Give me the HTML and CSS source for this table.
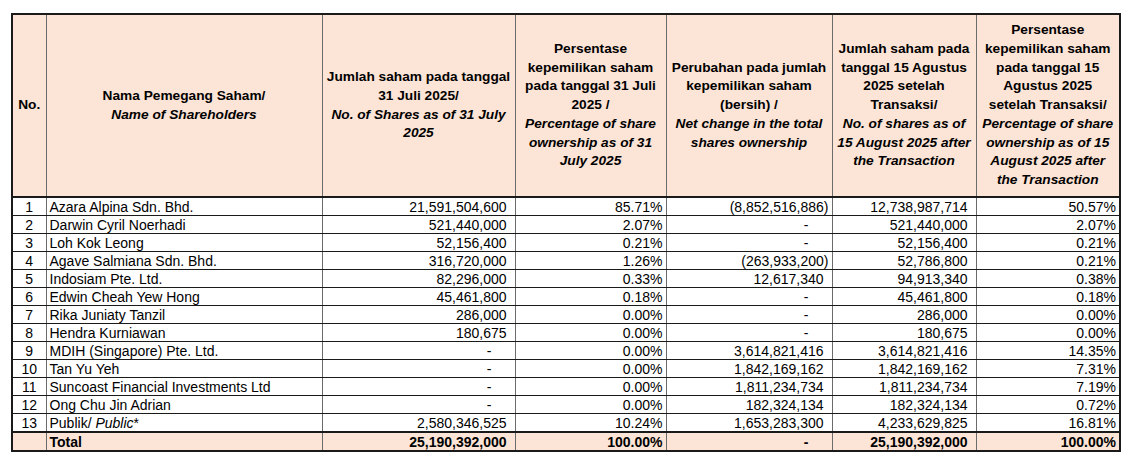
FILE: index.html
```html
<!DOCTYPE html>
<html>
<head>
<meta charset="utf-8">
<link rel="stylesheet" href="styles.css">
</head>
<body>
<table class="sh">
  <colgroup>
    <col class="c-no"><col class="c-name"><col class="c-a"><col class="c-b"><col class="c-c"><col class="c-d"><col class="c-e">
  </colgroup>
  <thead>
    <tr class="hd">
      <th>No.</th>
      <th>Nama Pemegang Saham/<br><i>Name of Shareholders</i></th>
      <th>Jumlah saham pada tanggal<br>31 Juli 2025/<br><i>No. of Shares as of 31 July<br>2025</i></th>
      <th>Persentase<br>kepemilikan saham<br>pada tanggal 31 Juli<br>2025 /<br><i>Percentage of share<br>ownership as of 31<br>July 2025</i></th>
      <th>Perubahan pada jumlah<br>kepemilikan saham<br>(bersih) /<br><i>Net change in the total<br>shares ownership</i></th>
      <th>Jumlah saham pada<br>tanggal 15 Agustus<br>2025 setelah<br>Transaksi/<br><i>No. of shares as of<br>15 August 2025 after<br>the Transaction</i></th>
      <th>Persentase<br>kepemilikan saham<br>pada tanggal 15<br>Agustus 2025<br>setelah Transaksi/<br><i>Percentage of share<br>ownership as of 15<br>August 2025 after<br>the Transaction</i></th>
    </tr>
  </thead>
  <tbody>
    <tr><td class="no">1</td><td class="nm">Azara Alpina Sdn. Bhd.</td><td class="num">21,591,504,600</td><td class="pct">85.71%</td><td class="neg">(8,852,516,886)</td><td class="num">12,738,987,714</td><td class="pct">50.57%</td></tr>
    <tr><td class="no">2</td><td class="nm">Darwin Cyril Noerhadi</td><td class="num">521,440,000</td><td class="pct">2.07%</td><td class="dash">-</td><td class="num">521,440,000</td><td class="pct">2.07%</td></tr>
    <tr><td class="no">3</td><td class="nm">Loh Kok Leong</td><td class="num">52,156,400</td><td class="pct">0.21%</td><td class="dash">-</td><td class="num">52,156,400</td><td class="pct">0.21%</td></tr>
    <tr><td class="no">4</td><td class="nm">Agave Salmiana Sdn. Bhd.</td><td class="num">316,720,000</td><td class="pct">1.26%</td><td class="neg">(263,933,200)</td><td class="num">52,786,800</td><td class="pct">0.21%</td></tr>
    <tr><td class="no">5</td><td class="nm">Indosiam Pte. Ltd.</td><td class="num">82,296,000</td><td class="pct">0.33%</td><td class="num">12,617,340</td><td class="num">94,913,340</td><td class="pct">0.38%</td></tr>
    <tr><td class="no">6</td><td class="nm">Edwin Cheah Yew Hong</td><td class="num">45,461,800</td><td class="pct">0.18%</td><td class="dash">-</td><td class="num">45,461,800</td><td class="pct">0.18%</td></tr>
    <tr><td class="no">7</td><td class="nm">Rika Juniaty Tanzil</td><td class="num">286,000</td><td class="pct">0.00%</td><td class="dash">-</td><td class="num">286,000</td><td class="pct">0.00%</td></tr>
    <tr><td class="no">8</td><td class="nm">Hendra Kurniawan</td><td class="num">180,675</td><td class="pct">0.00%</td><td class="dash">-</td><td class="num">180,675</td><td class="pct">0.00%</td></tr>
    <tr><td class="no">9</td><td class="nm">MDIH (Singapore) Pte. Ltd.</td><td class="dash">-</td><td class="pct">0.00%</td><td class="num">3,614,821,416</td><td class="num">3,614,821,416</td><td class="pct">14.35%</td></tr>
    <tr><td class="no">10</td><td class="nm">Tan Yu Yeh</td><td class="dash">-</td><td class="pct">0.00%</td><td class="num">1,842,169,162</td><td class="num">1,842,169,162</td><td class="pct">7.31%</td></tr>
    <tr><td class="no">11</td><td class="nm">Suncoast Financial Investments Ltd</td><td class="dash">-</td><td class="pct">0.00%</td><td class="num">1,811,234,734</td><td class="num">1,811,234,734</td><td class="pct">7.19%</td></tr>
    <tr><td class="no">12</td><td class="nm">Ong Chu Jin Adrian</td><td class="dash">-</td><td class="pct">0.00%</td><td class="num">182,324,134</td><td class="num">182,324,134</td><td class="pct">0.72%</td></tr>
    <tr><td class="no">13</td><td class="nm">Publik/ <i>Public</i>*</td><td class="num">2,580,346,525</td><td class="pct">10.24%</td><td class="num">1,653,283,300</td><td class="num">4,233,629,825</td><td class="pct">16.81%</td></tr>
    <tr class="total"><td class="no"></td><td class="nm">Total</td><td class="num">25,190,392,000</td><td class="pct">100.00%</td><td class="dash">-</td><td class="num">25,190,392,000</td><td class="pct">100.00%</td></tr>
  </tbody>
</table>
</body>
</html>
```

FILE: styles.css
```css
html, body {
  margin: 0;
  background: #ffffff;
}
body {
  padding: 13px 0 0 11px;
  font-family: "Liberation Sans", Arial, sans-serif;
  color: #000;
}
.sh {
  border-collapse: collapse;
  table-layout: fixed;
  width: 1110px;
  border: 2px solid #1a1a1a;
}
.c-no { width: 34px; }
.c-name { width: 276px; }
.c-a { width: 193px; }
.c-b { width: 151px; }
.c-c { width: 166px; }
.c-d { width: 144px; }
.c-e { width: 144px; }

.hd th {
  background: #fce4d6;
  height: 181px;
  padding: 0 2px;
  font-size: 13.7px;
  line-height: 18.8px;
  font-weight: bold;
  text-align: center;
  vertical-align: middle;
  white-space: nowrap;
  border-left: 1px solid #6b6b6b;
  border-right: 1px solid #6b6b6b;
  border-bottom: 2px solid #1a1a1a;
}
.sh td {
  height: 17px;
  padding: 0 3px;
  font-size: 14px;
  line-height: 16px;
  white-space: nowrap;
  overflow: hidden;
  border-left: 1px solid #6b6b6b;
  border-right: 1px solid #6b6b6b;
  border-bottom: 1px solid #1a1a1a;
  vertical-align: middle;
}
.sh td.no { text-align: center; padding: 0; }
.sh td.nm { text-align: left; }
.sh td.num { text-align: right; padding-right: 8px; }
.sh td.neg { text-align: right; padding-right: 3px; }
.sh td.pct { text-align: right; padding-right: 3px; }
.sh td.dash { text-align: right; padding-right: 23px; }

.total td {
  background: #fce4d6;
  font-weight: bold;
  border-top: 2px solid #1a1a1a;
}
```
